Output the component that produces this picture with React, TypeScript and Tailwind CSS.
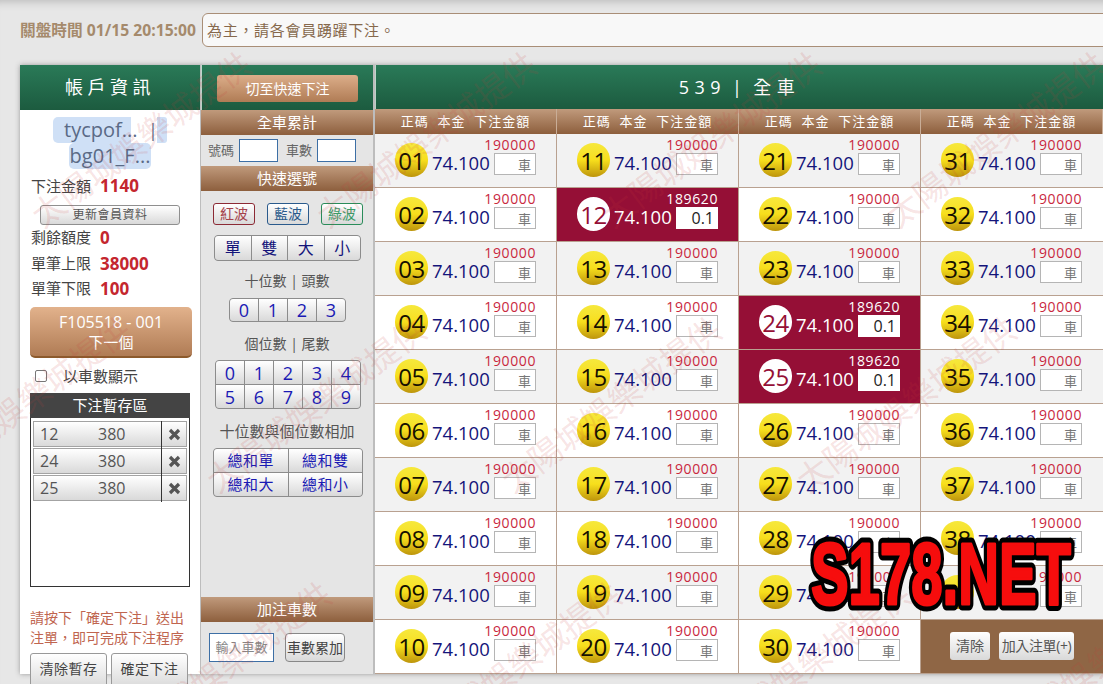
import React from "react";

const font = "font-['Open_Sans','Noto_Sans_CJK_TC',sans-serif]";
const bar = "bg-gradient-to-b from-[#c09a7c] to-[#8d5f3d] text-white text-center";
const grey = "bg-gradient-to-b from-white to-[#d9d9d9]";

const marks: [number, number][] = [];
[
  [25, 205, 285, 4],
  [-95, 470, 295, 4],
  [105, 735, 290, 4],
].forEach(([x, y, step, n]) => {
  for (let i = 0; i < n; i++) marks.push([x + i * step, y]);
});

function Cell({ n, sel, odd, last }: { n: number; sel: boolean; odd: boolean; last: boolean }) {
  const label = String(n).padStart(2, "0");
  const bg = sel ? "bg-[#950f36]" : odd ? "bg-[#f2f2f2]" : "bg-white";
  return (
    <div className={`h-[54px] flex pl-5 border-b border-r border-[#b9a190] ${bg} ${last ? "border-r-0" : ""}`}>
      <div className={`w-[33px] h-[34px] mt-[9px] pt-[2px] rounded-full flex items-center justify-center text-[24px] leading-none tracking-[-0.5px] ${sel ? "bg-white text-[#950f36]" : "bg-gradient-to-b from-[#f6e83c] via-[#f7df1c] to-[#bd950c] text-[#161000]"}`}>
        {label}
      </div>
      <div className="ml-[4px] w-[104px] flex flex-col items-end pt-[2px]">
        <div className={`h-[17px] text-[14px] leading-[17px] tracking-[0.6px] ${sel ? "text-white" : "text-[#c9283e]"}`}>{sel ? "189620" : "190000"}</div>
        <div className="flex items-start w-full justify-between">
          <span className={`text-[18.5px] leading-[24px] -mt-[2px] ${sel ? "text-white" : "text-[#14147a]"}`}>74.100</span>
          <div className={`w-[42px] h-[22px] bg-white text-right pr-[4px] leading-[22px] ${sel ? "text-[16px] text-[#222]" : "border border-[#b5b5b5] text-[13px] text-[#777]"}`}>
            {sel ? "0.1" : "車"}
          </div>
        </div>
      </div>
    </div>
  );
}

function Seg({ items, cols, className, text }: { items: string[]; cols: string; className: string; text: string }) {
  return (
    <div className={`grid ${cols} gap-px bg-[#8c8c8c] ${className} border border-[#8c8c8c] rounded-[4px] overflow-hidden`}>
      {items.map((t, i) => (
        <div key={t + i} className={`${grey} ${text} leading-none flex items-center justify-center`}>
          {t}
        </div>
      ))}
    </div>
  );
}

function Pending({ n }: { n: string }) {
  return (
    <div className={`h-[26px] flex items-center border border-[#a3a3a3] ${grey} text-[16px] text-[#555]`}>
      <span className="w-[64px] pl-[6px]">{n}</span>
      <span className="w-[63px]">380</span>
      <div className="h-[27px] flex-1 border-l border-[#333] flex items-center justify-center">
        <svg width="13" height="13" viewBox="0 0 13 13">
          <path d="M2 2L11 11M11 2L2 11" stroke="#555" strokeWidth="3.2" fill="none" />
        </svg>
      </div>
    </div>
  );
}

export default function App() {
  const selected = [12, 24, 25];
  const stat = "flex items-center gap-[9px]";
  const num = "text-[17px] text-[#c4262e]";
  return (
    <div className={`relative w-[1103px] h-[684px] overflow-hidden bg-[#e7e7e7] shadow-[inset_0_10px_8px_-8px_#bbb] ${font}`}>
      <div className="h-[65px] pl-5 pt-[13px] flex items-start">
        <div className="w-[182px] shrink-0 h-[34px] leading-[34px] text-[15.7px] font-bold text-[#a58a6c] whitespace-nowrap">關盤時間 01/15 20:15:00</div>
        <div className="w-[920px] shrink-0 h-[34px] border border-[#a98e77] rounded-l-[6px] bg-[#f8f8f8] pl-[4px] leading-[32px] text-[15px] tracking-[0.7px] text-[#86684c]">為主，請各會員踴躍下注。</div>
      </div>

      <div className="ml-5 w-[1083px] h-[609px] flex shadow-[0_0_5px_#999]">
        {/* account */}
        <div className="w-[181px] shrink-0 border-r border-[#bdbdbd] bg-white h-full">
          <div className="h-[45px] bg-gradient-to-b from-[#2a7a58] to-[#1c5b3f] text-white text-[18px] tracking-[0.25em] text-center leading-[44px]">帳戶資訊</div>
          <div className="pt-[7px] h-[59px] text-[20px] leading-[26px] text-[#5a6a86] flex flex-col items-center">
            <div className="flex w-[114px]">
              <span className="w-[78px] pl-[11px] bg-[#cfe0f6] rounded-l-[5px]">tycpof...</span>
              <span className="w-[26px] pl-[17px] text-[18px]">|</span>
              <span className="w-[10px] bg-[#cfe0f6] rounded-r-[3px]"></span>
            </div>
            <div className="bg-[#cfe0f6] rounded-[5px] px-[1px]">bg01_F...</div>
          </div>
          <div className="px-[11px] text-[15px] text-[#444]">
            <div className={`h-[28px] pt-[6px] leading-[24px] ${stat}`}><span>下注金額</span><b className={num}>1140</b></div>
            <div className={`mx-[9px] mt-[8px] h-[20px] border border-[#8f8f8f] rounded-[3px] ${grey} text-[12px] tracking-[0.5px] text-center leading-[18px] text-[#555]`}>更新會員資料</div>
            <div className={`h-[25px] ${stat}`}><span>剩餘額度</span><b className={num}>0</b></div>
            <div className={`mt-[1px] h-[25px] ${stat}`}><span>單筆上限</span><b className={num}>38000</b></div>
            <div className={`h-[25px] ${stat}`}><span>單筆下限</span><b className={num}>100</b></div>
          </div>
          <div className="ml-[10px] mt-[6px] w-[162px] h-[51px] rounded-[5px] border-b-2 border-[#8c5a2c] bg-gradient-to-b from-[#e2b28c] to-[#b07c55] text-white text-center leading-[20px] pt-[5px]">
            <div className="text-[16px]">F105518 - 001</div>
            <div className="text-[15px]">下一個</div>
          </div>
          <div className="mt-[11px] ml-[15px] h-[14px] flex items-center text-[15px] text-[#444]">
            <span className="w-[12px] h-[12px] border border-[#777] rounded-[2px] bg-white"></span>
            <span className="ml-[16px]">以車數顯示</span>
          </div>
          <div className="ml-[10px] mt-[10px] w-[160px] h-[194px] border border-[#333] border-t-0">
            <div className="h-[25px] -mx-px bg-[#444] text-white text-[15px] text-center leading-[25px]">下注暫存區</div>
            <div className="px-[2px] pt-[3px] flex flex-col gap-px">
              <Pending n="12" />
              <Pending n="24" />
              <Pending n="25" />
            </div>
          </div>
          <div className="ml-[10px] mt-[21px] text-[14px] leading-[20px] text-[#c0654f] whitespace-nowrap">
            <div>請按下「確定下注」送出</div>
            <div>注單，即可完成下注程序</div>
          </div>
          <div className="ml-[10px] mt-[5px] flex gap-[4px] relative">
            <div className={`w-[77px] h-[36px] border border-[#999] rounded-[3px] ${grey} text-[14px] text-center leading-[30px] text-[#444] tracking-[0.5px]`}>清除暫存</div>
            <div className={`w-[77px] h-[36px] border border-[#999] rounded-[3px] ${grey} text-[14px] text-center leading-[30px] text-[#444] tracking-[0.5px]`}>確定下注</div>
          </div>
        </div>

        {/* quick */}
        <div className="w-[173px] shrink-0 border-r border-[#bdbdbd] bg-[#e5e5e5] h-full flex flex-col">
          <div className="h-[45px] bg-gradient-to-b from-[#2a7a58] to-[#1c5b3f] border-l border-white/70 pl-[15px] pt-[10px]">
            <div className="w-[141px] h-[27px] rounded-[3px] bg-gradient-to-b from-[#dcae8a] to-[#b07c55] text-white text-[14px] text-center leading-[27px]">切至快速下注</div>
          </div>
          <div className={`h-[25px] ${bar} text-[15px] leading-[24px]`}>全車累計</div>
          <div className="h-[31px] flex items-center pl-[7px] text-[13px] text-[#666]">
            <span className="w-[31px]">號碼</span>
            <span className="w-[39px] h-[23px] border border-[#3d6fa5] bg-white"></span>
            <span className="w-[31px] ml-[8px]">車數</span>
            <span className="w-[39px] h-[23px] border border-[#3d6fa5] bg-white"></span>
          </div>
          <div className={`h-[25px] ${bar} text-[15px] leading-[24px]`}>快速選號</div>
          <div className="mt-[12px] pl-[12px] flex gap-[12px] text-[14px]">
            <div className={`w-[42px] h-[22px] border border-[#8c2a35] rounded-[3px] ${grey} text-[#a5424b] text-center leading-[20px]`}>紅波</div>
            <div className={`w-[42px] h-[22px] border border-[#2a5a8c] rounded-[3px] ${grey} text-[#2a5a8c] text-center leading-[20px]`}>藍波</div>
            <div className={`w-[42px] h-[22px] border border-[#2a8c5a] rounded-[3px] ${grey} text-[#3a9a68] text-center leading-[20px]`}>綠波</div>
          </div>
          <Seg items={["單", "雙", "大", "小"]} cols="grid-cols-4" className="ml-[13px] mt-[10px] w-[147px] h-[26px]" text="text-[16px] text-[#14147a]" />
          <div className="mt-[10px] h-[20px] text-center text-[14px] leading-[20px] text-[#555]">十位數 | 頭數</div>
          <Seg items={["0", "1", "2", "3"]} cols="grid-cols-4" className="ml-[28px] mt-[7px] w-[117px] h-[24px]" text="text-[18px] text-[#1a1ab4]" />
          <div className="mt-[12px] h-[20px] text-center text-[14px] leading-[20px] text-[#555]">個位數 | 尾數</div>
          <Seg items={["0", "1", "2", "3", "4", "5", "6", "7", "8", "9"]} cols="grid-cols-5" className="ml-[14px] mt-[6px] w-[146px] h-[49px]" text="text-[18px] text-[#1a1ab4]" />
          <div className="mt-[12px] h-[20px] text-center text-[15px] leading-[20px] text-[#555]">十位數與個位數相加</div>
          <Seg items={["總和單", "總和雙", "總和大", "總和小"]} cols="grid-cols-2" className="ml-[12px] mt-[7px] w-[150px] h-[49px]" text="text-[15px] tracking-[0.5px] text-[#1a1ab4]" />
          <div className={`mt-[100px] h-[25px] ${bar} text-[15px] leading-[24px]`}>加注車數</div>
          <div className="mt-[11px] pl-[8px] flex gap-[11px]">
            <div className="w-[65px] h-[29px] border border-[#3d6fa5] bg-white text-[13px] text-[#888] text-center leading-[27px]">輸入車數</div>
            <div className={`w-[60px] h-[29px] border border-[#888] rounded-[4px] ${grey} text-[14px] text-[#444] text-center leading-[27px] whitespace-nowrap`}>車數累加</div>
          </div>
        </div>

        {/* table */}
        <div className="flex-1 h-full flex flex-col border-l border-[#bdbdbd]">
          <div className="h-[45px] bg-gradient-to-b from-[#2a7a58] to-[#1c5b3f] border-l border-white/70 text-white text-[18px] tracking-[0.3em] text-center leading-[44px] whitespace-pre">
            <span>539</span>
            <span className="mx-[-4px]"> | </span>
            <span>全車</span>
          </div>
          <div className="grid grid-cols-[182px_182px_182px_182px]">
            {[0, 1, 2, 3].map((c) => (
              <div key={c}>
                <div className={`h-[25px] ${bar} text-[13px] leading-[25px] tracking-[1px] border-r border-[#c9ad97] whitespace-pre`}>正碼  本金  下注金額</div>
                {Array.from({ length: c === 3 ? 9 : 10 }, (_, i) => {
                  const n = c * 10 + i + 1;
                  return <Cell key={n} n={n} sel={selected.includes(n)} odd={i % 2 === 0} last={c === 3} />;
                })}
                {c === 3 && (
                  <div className="h-[54px] bg-[#8f6645] border-b border-[#b9a190] pl-[29px] pt-[12px] flex gap-[9px] text-[14px] text-[#555]">
                    <div className={`w-[40px] h-[28px] rounded-[3px] ${grey} text-center leading-[28px]`}>清除</div>
                    <div className={`w-[75px] h-[28px] rounded-[3px] ${grey} text-center leading-[28px] whitespace-nowrap tracking-[-0.4px]`}>加入注單(+)</div>
                  </div>
                )}
              </div>
            ))}
          </div>
        </div>
      </div>

      {/* watermark overlay */}
      {marks.map(([x, y], i) => (
        <div
          key={i}
          style={{ left: x, top: y }}
          className="absolute pointer-events-none origin-top-left -rotate-[37deg] text-[33px] leading-none whitespace-nowrap text-[#c83c3c]/15 font-['Noto_Sans_CJK_TC',serif]"
        >
          太陽城娛樂城提供
        </div>
      ))}

      {/* site logo */}
      <svg className="absolute left-[800px] top-[530px] pointer-events-none" width="290" height="90" viewBox="0 0 290 90">
        <text x="11" y="74" fontFamily="'Liberation Sans',sans-serif" fontWeight="700" fontSize="88" textLength="260" lengthAdjust="spacingAndGlyphs" fill="#000" stroke="#000" strokeWidth="13" strokeLinejoin="round">S178.NET</text>
        <text x="11" y="74" fontFamily="'Liberation Sans',sans-serif" fontWeight="700" fontSize="88" textLength="260" lengthAdjust="spacingAndGlyphs" fill="#f60d0d" stroke="#f60d0d" strokeWidth="3" strokeLinejoin="round">S178.NET</text>
      </svg>
    </div>
  );
}
